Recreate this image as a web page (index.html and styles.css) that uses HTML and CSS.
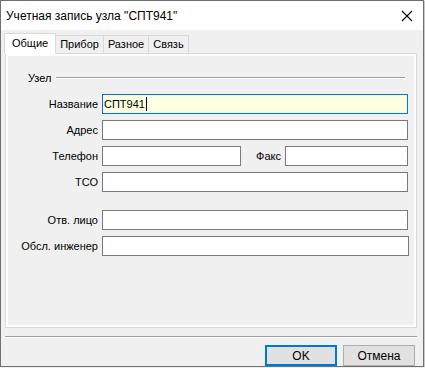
FILE: index.html
```
<!DOCTYPE html>
<html lang="ru">
<head>
    <meta charset="UTF-8">
    <title>Учетная запись узла</title>
    <link rel="stylesheet" href="styles.css">
</head>
<body>
    <div class="window">
        <header class="titlebar">
            <span class="title">Учетная запись узла "СПТ941"</span>
            <svg class="close" width="12" height="12" viewBox="0 0 12 12">
                <path d="M1 1 L11 11 M11 1 L1 11" stroke="#000" stroke-width="1.1" fill="none"/>
            </svg>
        </header>

        <div class="tabs">
            <div class="tab active">Общие</div>
            <div class="tab">Прибор</div>
            <div class="tab">Разное</div>
            <div class="tab">Связь</div>
        </div>

        <div class="panel">
            <div class="panel-inner">
                <div class="group-title">
                    <span>Узел</span>
                    <div class="group-line"></div>
                </div>

                <div class="form">
                    <label class="label">Название</label>
                    <div class="input focused">СПТ941<span class="caret"></span></div>

                    <label class="label">Адрес</label>
                    <div class="input"></div>

                    <label class="label">Телефон</label>
                    <div class="phone-row">
                        <div class="input phone"></div>
                        <label class="label fax-label">Факс</label>
                        <div class="input fax"></div>
                    </div>

                    <label class="label">ТСО</label>
                    <div class="input"></div>

                    <label class="label spaced">Отв. лицо</label>
                    <div class="input spaced"></div>

                    <label class="label">Обсл. инженер</label>
                    <div class="input wide"></div>
                </div>
            </div>
        </div>

        <div class="separator"></div>

        <div class="buttons">
            <button class="btn btn-default">OK</button>
            <button class="btn">Отмена</button>
        </div>
    </div>
</body>
</html>
```

FILE: styles.css
```
* {
    margin: 0;
    padding: 0;
    box-sizing: border-box;
}

body {
    background: #f0f0f0;
    font-family: 'Liberation Sans', Arial, sans-serif;
    font-size: 11px;
    color: #000;
}

.window {
    width: 424px;
    height: 367px;
    border: 1px solid #707070;
    box-shadow: 1px 1px 0 #c9c9c9;
    background: #f0f0f0;
    display: flex;
    flex-direction: column;
}

.titlebar {
    height: 29px;
    background: #fff;
    display: flex;
    align-items: center;
    justify-content: space-between;
    padding: 0 10px 0 5px;
}

.title {
    font-size: 12px;
}

/* tabs */
.tabs {
    display: flex;
    align-items: flex-end;
    height: 21px;
    margin-top: 2px;
    padding-left: 3px;
    position: relative;
    z-index: 1;
}

.tab {
    height: 18px;
    padding: 0 4px;
    line-height: 16px;
    border: 1px solid #d9d9d9;
    border-bottom: none;
    background: #f0f0f0;
    margin-right: -1px;
}

.tab.active {
    height: 21px;
    padding: 0 7px;
    line-height: 19px;
    background: #fff;
    border-bottom: 1px solid #fff;
    margin-bottom: -1px;
    margin-right: -1px;
}

.panel {
    height: 275px;
    margin: 0 6px 0 4px;
    border: 1px solid #d9d9d9;
    background: #fff;
    padding: 2px;
}

.panel-inner {
    height: 100%;
    background: #f0f0f0;
    padding: 15px 6px 0 0;
}

.group-title {
    display: flex;
    align-items: center;
    gap: 5px;
    padding-left: 20px;
    height: 14px;
    margin-right: 3px;
}

.group-line {
    flex: 1;
    height: 2px;
    border-top: 1px solid #a0a0a0;
    border-bottom: 1px solid #fff;
}

/* form */
.form {
    display: grid;
    grid-template-columns: 90px 1fr;
    column-gap: 4px;
    row-gap: 6px;
    margin-top: 9px;
}

.label {
    height: 20px;
    line-height: 20px;
    text-align: right;
    white-space: nowrap;
}

.input {
    height: 20px;
    border: 1px solid #7a7a7a;
    background: #fff;
    padding: 0 1px;
    line-height: 18px;
    font-size: 11px;
}

.input.focused {
    border-color: #0078d7;
    background: #ffffe1;
}

.caret {
    display: inline-block;
    width: 1px;
    height: 14px;
    background: #000;
    vertical-align: -3px;
    margin-left: 1px;
}

.spaced {
    margin-top: 12px;
}

.input.wide {
    margin-right: -1px;
}

.phone-row {
    display: flex;
}

.input.phone {
    width: 139px;
}

.fax-label {
    flex: 1;
    padding-right: 4px;
}

.input.fax {
    width: 123px;
}

.separator {
    height: 2px;
    margin: 8px 6px 0 4px;
    border-top: 1px solid #a0a0a0;
    border-bottom: 1px solid #fff;
}

.buttons {
    display: flex;
    justify-content: flex-end;
    gap: 6px;
    padding: 7px 8px 0 0;
}

.btn {
    width: 72px;
    height: 21px;
    border: 1px solid #adadad;
    background: #e1e1e1;
    font-family: 'Liberation Sans', Arial, sans-serif;
    font-size: 12px;
    color: #000;
}

.btn-default {
    border: 2px solid #0078d7;
}
```
